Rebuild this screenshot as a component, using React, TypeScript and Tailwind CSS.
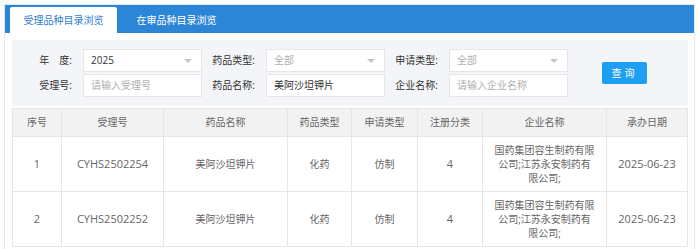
import React from 'react';

const COLS = [49, 102, 124, 64, 66, 65, 124, 81];
const HEADS = ['序号', '受理号', '药品名称', '药品类型', '申请类型', '注册分类', '企业名称', '承办日期'];

const ROWS = [
  ['1', 'CYHS2502254', '美阿沙坦钾片', '化药', '仿制', '4', '国药集团容生制药有限公司;江苏永安制药有限公司;', '2025-06-23'],
  ['2', 'CYHS2502252', '美阿沙坦钾片', '化药', '仿制', '4', '国药集团容生制药有限公司;江苏永安制药有限公司;', '2025-06-23'],
];

// cells that are plain latin text read a touch larger in the original
const LATIN = [true, true, false, false, false, true, false, true];

function Caret() {
  return (
    <svg width="8" height="5" viewBox="0 0 8 5" className="absolute right-[9px] top-[9px]">
      <path d="M0 0 L8 0 L4 4 Z" fill="#c6c6c6" />
    </svg>
  );
}

function Field({ value, placeholder, select }: { value?: string; placeholder?: string; select?: boolean }) {
  return (
    <div className="relative flex h-[23px] w-[119px] items-center border border-[#e6e6e6] bg-white pl-[7px]">
      {value ? (
        <span className="text-[#333]">{value}</span>
      ) : (
        <span className="text-[#b0b0b0]">{placeholder}</span>
      )}
      {select && <Caret />}
    </div>
  );
}

function Label({ text }: { text: string }) {
  return <div className="w-[64px] pr-[11px] text-right text-[#333]">{text}</div>;
}

export default function App() {
  return (
    <div
      className="h-[249px] w-[700px] overflow-hidden bg-white pl-[4px] pt-[4px] text-[10px]"
      style={{ fontFamily: '"Open Sans", "Noto Sans CJK SC", sans-serif' }}
    >
      <div className="h-full w-[691px] border border-b-0 border-[#e4e8eb]">
        {/* tab bar */}
        <div className="flex h-[28px] items-end gap-[6px] bg-[#2c86d8] pl-[5px]">
          <div className="flex h-[26px] w-[107px] items-center justify-center rounded-t-[2px] bg-white text-[#2f80d0]">
            受理品种目录浏览
          </div>
          <div className="flex h-[26px] w-[107px] items-center justify-center text-white">在审品种目录浏览</div>
        </div>

        <div className="pl-[7px] pr-[6px] pt-[7px]">
          {/* search panel */}
          <div className="flex h-[66px] items-center bg-[#f3f5f8] pl-[7px]">
            <div className="flex flex-col gap-[2px]">
              <div className="flex items-center">
                <Label text={'年\u2003度:'} />
                <Field value="2025" select />
                <Label text="药品类型:" />
                <Field placeholder="全部" select />
                <Label text="申请类型:" />
                <Field placeholder="全部" select />
              </div>
              <div className="flex items-center">
                <Label text="受理号:" />
                <Field placeholder="请输入受理号" />
                <Label text="药品名称:" />
                <Field value="美阿沙坦钾片" />
                <Label text="企业名称:" />
                <Field placeholder="请输入企业名称" />
              </div>
            </div>
            <button className="ml-[34px] h-[22px] w-[45px] rounded-[2px] bg-[#1e9ff2] tracking-[3px] text-white">
              查询
            </button>
          </div>

          {/* results */}
          <table className="mt-[2px] w-[675px] table-fixed border-collapse text-center text-[#666]">
            <colgroup>
              {COLS.map((w, i) => (
                <col key={i} style={{ width: w }} />
              ))}
            </colgroup>
            <thead>
              <tr className="h-[28px] bg-[#f2f2f2]">
                {HEADS.map((h) => (
                  <th key={h} className="border border-[#e6e6e6] font-normal text-[#666]">
                    {h}
                  </th>
                ))}
              </tr>
            </thead>
            <tbody>
              {ROWS.map((r) => (
                <tr key={r[0]} className="h-[55px]">
                  {r.map((c, i) => (
                    <td
                      key={i}
                      className={`border border-[#e6e6e6] px-[11px] py-[6px] leading-[14px] ${LATIN[i] ? 'text-[11px]' : ''}`}
                    >
                      {c}
                    </td>
                  ))}
                </tr>
              ))}
            </tbody>
          </table>
        </div>
      </div>
    </div>
  );
}
